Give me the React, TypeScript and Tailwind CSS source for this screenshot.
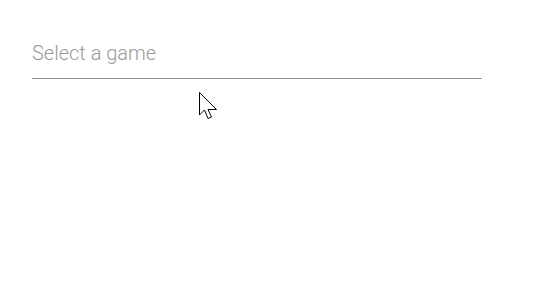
import React from 'react';

const Cursor: React.FC = () => (
  <svg className="absolute left-[199px] top-[92px]" width="20" height="28" viewBox="0 0 20 28">
    <path
      d="M0.5 0.5 L0.5 23 L5.5 18 L9 26.5 L12.5 25 L9 17.5 L17.5 17.5 Z"
      fill="#fff"
      stroke="#000"
      strokeWidth="1"
      strokeLinejoin="miter"
    />
  </svg>
);

const App: React.FC = () => {
  return (
    <div className="relative h-[301px] w-[539px] bg-white font-['Roboto',sans-serif]">
      <div className="px-8 pt-[40px]">
        {/* Game select */}
        <div className="w-[450px] border-b border-[#949494] pb-[11px]">
          <span className="text-[20px] font-light leading-[26px] text-[#9a9a9a]">Select a game</span>
        </div>
      </div>
      <Cursor />
    </div>
  );
};

export default App;
